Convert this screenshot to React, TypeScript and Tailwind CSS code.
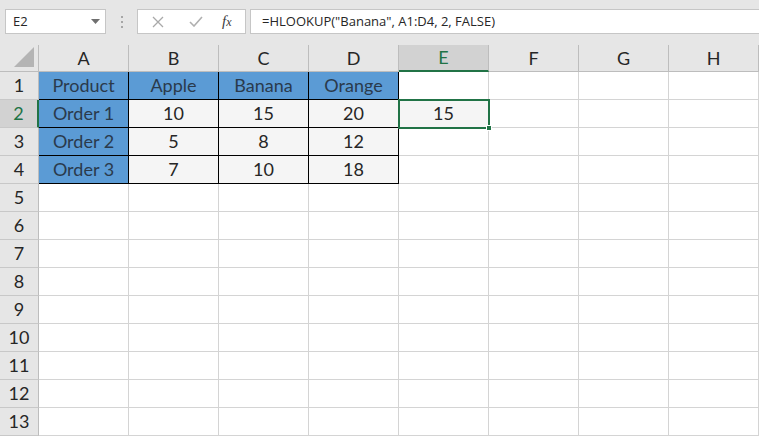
import React from 'react'

const COLS = ['A', 'B', 'C', 'D', 'E', 'F', 'G', 'H']
const ROWS = Array.from({ length: 13 }, (_, i) => i + 1)

const DATA: Record<string, string> = {
  A1: 'Product', B1: 'Apple', C1: 'Banana', D1: 'Orange',
  A2: 'Order 1', B2: '10', C2: '15', D2: '20', E2: '15',
  A3: 'Order 2', B3: '5', C3: '8', D3: '12',
  A4: 'Order 3', B4: '7', C4: '10', D4: '18',
}

function cellClass(col: string, row: number) {
  const ci = COLS.indexOf(col)
  const inTable = ci <= 3 && row <= 4
  const isHeader = inTable && (ci === 0 || row === 1)
  if (isHeader) return 'bg-[#5b9bd5] text-[#2a3a4c] border-r border-b border-black'
  if (inTable) return 'bg-[#f5f5f5] text-[#262626] border-r border-b border-black'
  if (col === 'E' && row === 2) return 'bg-[#f5f5f5] text-[#262626] border-r border-b border-[#d4d4d4]'
  return 'bg-white text-[#262626] border-r border-b border-[#d4d4d4]'
}

function FormulaBar() {
  return (
    <div className="flex h-[45px] items-start bg-[#e6e6e6] pt-[9px] pl-[5px] font-['Open_Sans',sans-serif]">
      <div className="flex h-[25px] w-[101px] items-center justify-between border border-[#c6c6c6] bg-white pl-[7px] pr-[5px] text-[13px] text-[#262626]">
        <span>E2</span>
        <svg width="9" height="5" viewBox="0 0 9 5">
          <path d="M0 0h9L4.5 5z" fill="#6f6f6f" />
        </svg>
      </div>
      <div className="flex h-[25px] w-[31px] flex-col items-center justify-center gap-[3px]">
        <span className="h-[2px] w-[2px] bg-[#a6a6a6]" />
        <span className="h-[2px] w-[2px] bg-[#a6a6a6]" />
        <span className="h-[2px] w-[2px] bg-[#a6a6a6]" />
      </div>
      <div className="flex h-[25px] w-[109px] items-center border border-[#c6c6c6] bg-white">
        <svg className="ml-[14px]" width="12" height="12" viewBox="0 0 12 12">
          <path d="M1 1l10 10M11 1L1 11" stroke="#a9a9a9" strokeWidth="1.3" />
        </svg>
        <svg className="ml-[25px]" width="14" height="11" viewBox="0 0 14 11">
          <path d="M1 6l4 4 8-9" stroke="#b0b0b0" strokeWidth="1.6" fill="none" />
        </svg>
        <span className="ml-[19px] font-['Liberation_Serif',serif] text-[15px] italic text-[#3c3c3c]">
          f<span className="text-[12px]">x</span>
        </span>
      </div>
      <div className="ml-[4px] flex h-[25px] flex-1 items-center border border-r-0 border-[#c6c6c6] bg-white pl-[11px] text-[13px] text-[#262626]">
        =HLOOKUP("Banana", A1:D4, 2, FALSE)
      </div>
    </div>
  )
}

export default function App() {
  return (
    <div className="h-[436px] w-[759px] overflow-hidden bg-white">
      <FormulaBar />
      <div className="grid grid-cols-[39px_repeat(8,90px)] grid-rows-[27px_repeat(13,28px)] font-['Lato',sans-serif] text-[18px]">
        <div className="relative border-r border-b border-[#bdbdbd] bg-[#e6e6e6]">
          <svg className="absolute right-[4px] bottom-[4px]" width="20" height="20" viewBox="0 0 20 20">
            <path d="M20 0V20H0z" fill="#b4b4b4" />
          </svg>
        </div>
        {COLS.map((c) => (
          <div
            key={c}
            className={
              c === 'E'
                ? 'flex items-center justify-center border-r border-b-2 border-r-[#bdbdbd] border-b-[#217346] bg-[#d2d2d2] text-[#217346]'
                : 'flex items-center justify-center border-r border-b border-[#bdbdbd] bg-[#e6e6e6] text-[#262626]'
            }
          >
            {c}
          </div>
        ))}
        {ROWS.map((r) => (
          <React.Fragment key={r}>
            <div
              className={
                r === 2
                  ? 'flex items-center justify-center border-r-2 border-b border-r-[#217346] border-b-[#c8c8c8] bg-[#d2d2d2] text-[#217346]'
                  : 'flex items-center justify-center border-r border-b border-r-[#bdbdbd] border-b-[#c8c8c8] bg-[#e6e6e6] text-[#262626]'
              }
            >
              {r}
            </div>
            {COLS.map((c) => (
              <div
                key={c + r}
                className={`relative flex items-center justify-center ${cellClass(c, r)}`}
              >
                {DATA[c + r]}
                {c === 'E' && r === 2 && (
                  <div className="absolute -top-px -left-px z-10 h-[30px] w-[92px] border-2 border-[#217346]">
                    <span className="absolute -right-[4px] -bottom-[4px] h-[6px] w-[6px] border border-white bg-[#217346]" />
                  </div>
                )}
              </div>
            ))}
          </React.Fragment>
        ))}
      </div>
    </div>
  )
}
